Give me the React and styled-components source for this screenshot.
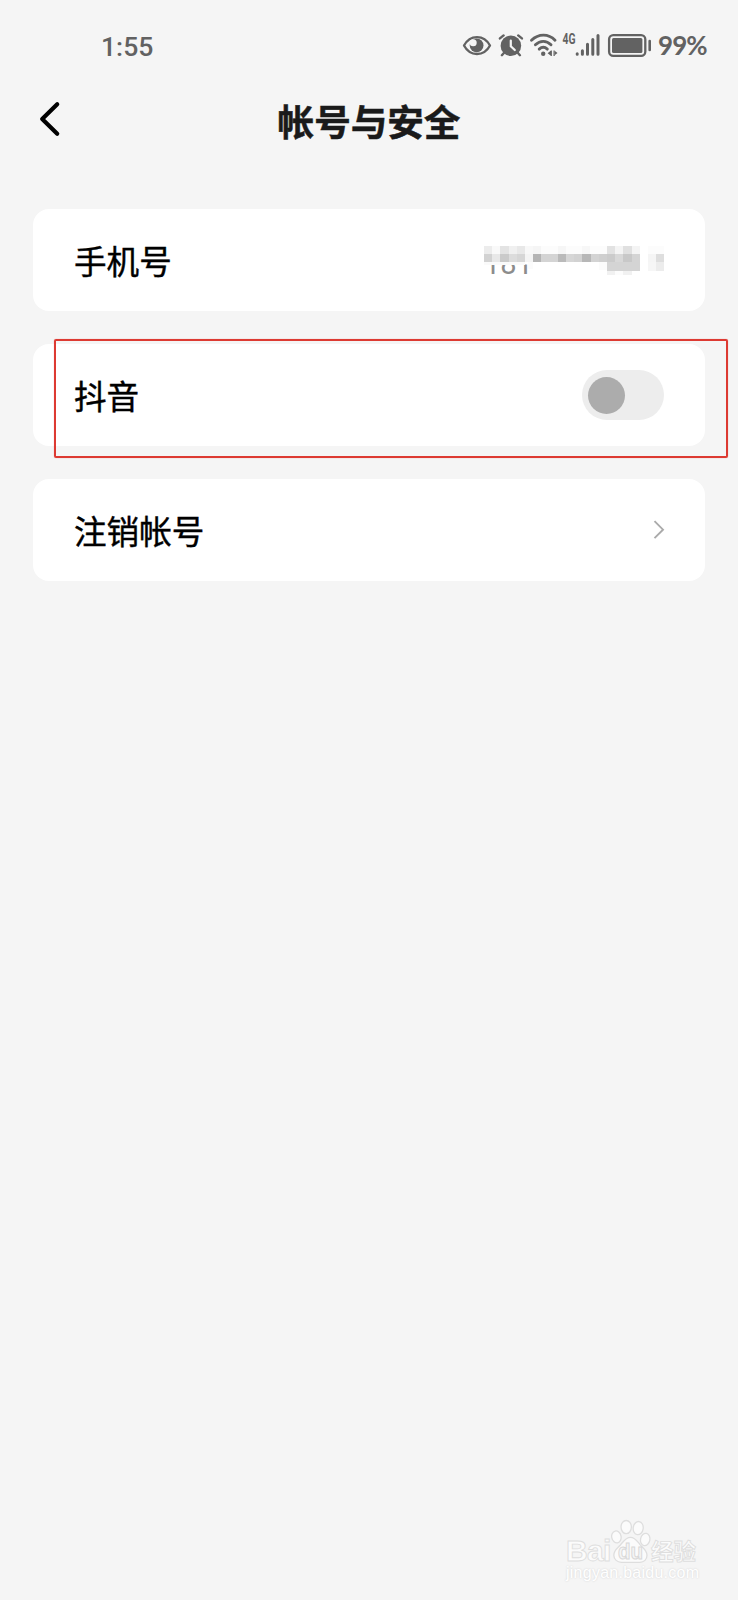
import React, { useState } from 'react'
import styled, { createGlobalStyle } from 'styled-components'

const GlobalStyle = createGlobalStyle`
  * {
    box-sizing: border-box;
  }
  body {
    margin: 0;
    background: #f5f5f5;
    font-family: 'Noto Sans CJK SC', sans-serif;
  }
`

// rows of the mosaic over the phone number: [x, y, width, height, grey]
const mosaic = [
  [0, 0, 8, 8, 236],
  [8, 0, 8, 8, 249],
  [16, 0, 9, 8, 227],
  [25, 0, 8, 8, 240],
  [33, 0, 8, 8, 232],
  [41, 0, 8, 8, 248],
  [49, 0, 8, 8, 245],
  [57, 0, 17, 8, 252],
  [74, 0, 8, 8, 246],
  [82, 0, 16, 8, 252],
  [98, 0, 8, 8, 247],
  [106, 0, 17, 8, 252],
  [123, 0, 8, 8, 226],
  [131, 0, 8, 8, 244],
  [139, 0, 9, 8, 224],
  [148, 0, 8, 8, 244],
  [164, 0, 16, 8, 252],
  [0, 8, 8, 8, 210],
  [8, 8, 8, 8, 232],
  [16, 8, 9, 8, 202],
  [25, 8, 8, 8, 220],
  [33, 8, 8, 8, 214],
  [41, 8, 8, 8, 244],
  [49, 8, 8, 8, 180],
  [57, 8, 17, 8, 212],
  [74, 8, 8, 8, 186],
  [82, 8, 8, 8, 214],
  [90, 8, 8, 8, 210],
  [98, 8, 9, 8, 183],
  [107, 8, 8, 8, 211],
  [115, 8, 8, 8, 207],
  [123, 8, 8, 8, 203],
  [131, 8, 8, 8, 216],
  [139, 8, 9, 8, 200],
  [148, 8, 8, 8, 212],
  [164, 8, 8, 8, 245],
  [172, 8, 8, 8, 222],
  [0, 16, 41, 3, 250],
  [44, 16, 5, 7, 251],
  [115, 16, 8, 8, 251],
  [123, 16, 33, 9, 212],
  [164, 16, 8, 9, 246],
  [172, 16, 8, 9, 236],
  [123, 25, 8, 4, 241],
  [131, 25, 8, 4, 252],
  [139, 25, 9, 4, 241],
]

export default function App() {
  const [linked, setLinked] = useState(false)
  return (
    <>
      <GlobalStyle />
      <Page>
        <StatusBar>
          <Clock>1:55</Clock>
          <StatusIcons />
          <Percent>99%</Percent>
        </StatusBar>
        <Header>
          <BackButton aria-label='返回'>
            <svg width='22' height='36' viewBox='0 0 22 36'>
              <path
                d='M18.2 3.2L3.2 18L18.2 32.8'
                fill='none'
                stroke='#000'
                strokeWidth='4.2'
                strokeLinecap='round'
                strokeLinejoin='round'
              />
            </svg>
          </BackButton>
          <Title>帐号与安全</Title>
        </Header>
        <List>
          <Card>
            <Label>手机号</Label>
            <Phone>
              <PhoneText>181</PhoneText>
              <Mosaic />
            </Phone>
          </Card>
          <Card>
            <Label>抖音</Label>
            <Toggle
              role='switch'
              aria-checked={linked}
              $on={linked}
              onClick={() => setLinked(!linked)}
            >
              <Knob />
            </Toggle>
            <Highlight />
          </Card>
          <Card>
            <Label>注销帐号</Label>
            <Chevron width='12' height='20' viewBox='0 0 12 20'>
              <path
                d='M1.5 1.2L10 9.7L1.5 18.2'
                fill='none'
                stroke='#aaa'
                strokeWidth='1.9'
              />
            </Chevron>
          </Card>
        </List>
        <Watermark>
          <Brand>
            <BrandText>Bai</BrandText>
            <Paw />
            <BrandText $cjk>经验</BrandText>
          </Brand>
          <Site>jingyan.baidu.com</Site>
        </Watermark>
      </Page>
    </>
  )
}

const StatusIcons = () => (
  <IconStrip width='190' height='30' viewBox='462 30 190 30'>
    {/* eye */}
    <path
      d='M464 45.5C470 34.2 484 34.2 490 45.5C484 56.8 470 56.8 464 45.5Z'
      fill='none'
      stroke='#626262'
      strokeWidth='2.3'
      strokeLinejoin='round'
    />
    <circle cx='476.6' cy='45.4' r='6.9' fill='#626262' />
    <circle cx='473.2' cy='42.7' r='3.5' fill='#f5f5f5' />
    {/* alarm */}
    <circle cx='510.9' cy='45.8' r='10.3' fill='#626262' />
    <path
      d='M499.9 38.4L503.6 35.4M521.9 38.4L518.2 35.4M504.3 52.5L501.9 55.2M517.5 52.5L519.9 55.2'
      stroke='#626262'
      strokeWidth='2.4'
      strokeLinecap='round'
    />
    <path
      d='M510.8 40.5V46.2L514.8 50'
      fill='none'
      stroke='#f5f5f5'
      strokeWidth='2.2'
      strokeLinecap='round'
    />
    {/* wifi */}
    <g fill='none' stroke='#626262' strokeWidth='2.9' strokeLinecap='round'>
      <path d='M531.5 40.2C538.5 33.4 548.5 33.4 555 40.2' />
      <path d='M535.4 44.8C540.2 40.2 546.4 40.2 551 44.8' />
      <path d='M539.2 49.1C541.8 46.8 544.8 46.8 547.3 49.1' />
    </g>
    <circle cx='543.2' cy='53.8' r='2.2' fill='#626262' />
    <path
      d='M547.6 53.2L550.6 50.8V55.6ZM550.6 50.4H551.9V56H550.6ZM557.5 53L554.6 50.7V55.3ZM553.5 50.4H554.8V56H553.5Z'
      fill='#626262'
    />
    {/* signal */}
    <g stroke='#626262' strokeWidth='3' strokeLinecap='round'>
      <path d='M577.2 53.8V54.2M582.4 50.8V54.2M587.5 44.2V54.2M592.8 39.4V54.2M598 35.5V54.2' />
    </g>
    <NetText x='562.6' y='43.6' textLength='13' lengthAdjust='spacingAndGlyphs'>
      4G
    </NetText>
    {/* battery */}
    <rect
      x='609.1'
      y='35.1'
      width='36.2'
      height='20.8'
      rx='4.2'
      fill='none'
      stroke='#626262'
      strokeWidth='2.3'
    />
    <rect x='612' y='37.9' width='30.4' height='15.2' rx='1.5' fill='#626262' />
    <rect x='648.4' y='39.8' width='2.6' height='11.4' rx='1.3' fill='#626262' />
  </IconStrip>
)

const Mosaic = () => (
  <MosaicLayer width='180' height='29' viewBox='0 0 180 29'>
    <rect x='0' y='0' width='45' height='18.5' fill='#fff' />
    {mosaic.map(([x, y, w, h, v]) => (
      <rect
        key={`${x}-${y}`}
        x={x}
        y={y}
        width={w}
        height={h}
        fill={`rgb(${v},${v},${v})`}
        shapeRendering='crispEdges'
      />
    ))}
  </MosaicLayer>
)

const Paw = () => (
  <PawIcon width='42' height='46' viewBox='0 0 42 46'>
    <g fill='#fbfbfb' stroke='#dedede' strokeWidth='1.3'>
      <ellipse cx='5.4' cy='18.9' rx='4.7' ry='6' transform='rotate(-12 5.4 18.9)' />
      <ellipse cx='15.2' cy='9.1' rx='5.2' ry='6.6' />
      <ellipse cx='27.2' cy='10.1' rx='5' ry='6.6' transform='rotate(8 27.2 10.1)' />
      <ellipse cx='34.2' cy='21.5' rx='4.7' ry='6.2' transform='rotate(12 34.2 21.5)' />
      <path d='M19.5 19.3C14.5 19.3 12.5 23.5 9.4 27C5.5 31 2.8 32.5 2.8 37.3C2.8 41.5 6.4 44.3 10.4 44.3H29C33 44.3 36 41.5 36 37.3C36 32.5 32.4 30.5 29.2 26.9C26.2 23.3 24.5 19.3 19.5 19.3Z' />
    </g>
    <DuText x='7' y='40.5' textLength='25' lengthAdjust='spacingAndGlyphs'>
      du
    </DuText>
  </PawIcon>
)

const Page = styled.div`
  width: 738px;
  height: 1600px;
  background: #f5f5f5;
  position: relative;
  overflow: hidden;
`
const StatusBar = styled.div`
  display: flex;
  align-items: center;
  height: 92px;
  padding-left: 101px;
  padding-right: 30px;
  font-family: Roboto, sans-serif;
  font-weight: 500;
  color: #626262;
`
const Clock = styled.span`
  flex: 1;
  font-size: 26.6px;
  line-height: 32px;
  padding-top: 2px;
`
const IconStrip = styled.svg`
  margin-top: -2px;
  margin-right: 6px;
`
const Percent = styled.span`
  width: 50px;
  font-family: Lato, sans-serif;
  font-size: 26px;
  line-height: 32px;
  font-weight: 700;
  letter-spacing: -0.9px;
  padding-bottom: 2px;
  white-space: nowrap;
`
const NetText = styled.text`
  font-family: Roboto, sans-serif;
  font-size: 14.5px;
  font-weight: 700;
  fill: #626262;
`
const Header = styled.header`
  display: grid;
  grid-template-columns: 60px 1fr 60px;
  align-items: center;
  height: 60px;
  padding: 0 20px;
`
const BackButton = styled.button`
  display: flex;
  padding: 0 0 6px 19px;
  border: none;
  background: none;
  cursor: pointer;
`
const Title = styled.h1`
  margin: 0;
  padding-bottom: 3px;
  text-align: center;
  font-size: 36.6px;
  line-height: 54px;
  font-weight: 700;
  color: #1a1a1a;
  -webkit-text-stroke: 0.5px #1a1a1a;
`
const List = styled.main`
  display: flex;
  flex-direction: column;
  gap: 33px;
  padding: 57px 33px 0;
`
const Card = styled.section`
  display: flex;
  align-items: center;
  justify-content: space-between;
  height: 102px;
  padding: 0 41px;
  border-radius: 16px;
  background: #fff;
  position: relative;
`
const Label = styled.span`
  font-size: 32.6px;
  line-height: 48px;
  font-weight: 400;
  color: #000;
  -webkit-text-stroke: 0.4px #000;
`
const Phone = styled.div`
  width: 180px;
  height: 29px;
  position: relative;
`
const PhoneText = styled.span`
  display: block;
  font-family: Roboto, sans-serif;
  font-size: 29px;
  line-height: 36px;
  color: #8c8c8c;
`
const MosaicLayer = styled.svg`
  position: absolute;
  top: 0;
  left: 0;
`
const Toggle = styled.button`
  display: flex;
  align-items: center;
  justify-content: ${(props) => (props.$on ? 'flex-end' : 'flex-start')};
  width: 82px;
  height: 50px;
  padding: 0 6px;
  border: none;
  border-radius: 25px;
  background: #ededed;
  cursor: pointer;
`
const Knob = styled.span`
  width: 37px;
  height: 37px;
  border-radius: 50%;
  background: #acacac;
`
const Highlight = styled.div`
  position: absolute;
  top: -5px;
  left: 21px;
  width: 674px;
  height: 119px;
  border: 2px solid #dd3a32;
  border-radius: 2px;
  box-shadow: 0 0 1px rgba(221, 58, 50, 0.6);
  pointer-events: none;
`
const Chevron = styled.svg`
  margin-right: -1px;
`
const Watermark = styled.div`
  position: absolute;
  left: 566px;
  top: 1519px;
  width: 134px;
`
const Brand = styled.div`
  display: flex;
  align-items: flex-end;
  height: 45px;
`
const BrandText = styled.span`
  width: ${(props) => (props.$cjk ? '46px' : '45px')};
  font-family: ${(props) =>
    props.$cjk ? "'Noto Sans CJK SC'" : "'Liberation Sans'"}, sans-serif;
  font-size: ${(props) => (props.$cjk ? '22.5px' : '30px')};
  line-height: ${(props) => (props.$cjk ? '27px' : '26px')};
  letter-spacing: ${(props) => (props.$cjk ? '0' : '-0.7px')};
  font-weight: 700;
  white-space: nowrap;
  color: #fbfbfb;
  -webkit-text-stroke: 0.9px #dedede;
`
const PawIcon = styled.svg`
  flex: none;
  margin-right: -2px;
`
const DuText = styled.text`
  font-family: 'Liberation Sans', sans-serif;
  font-size: 22px;
  font-weight: 700;
  fill: #f5f5f5;
  stroke: #d8d8d8;
  stroke-width: 1px;
`
const Site = styled.div`
  font-family: 'Liberation Sans', sans-serif;
  font-size: 16px;
  line-height: 18px;
  letter-spacing: 0.25px;
  white-space: nowrap;
  color: #fff;
  text-shadow: 0 0 2px #cfcfcf;
`
